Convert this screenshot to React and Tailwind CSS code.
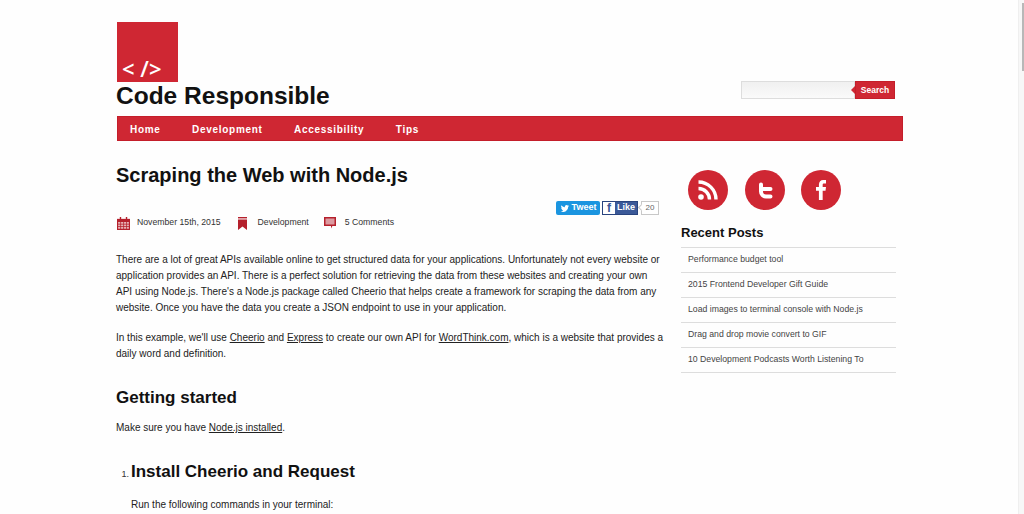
import React from 'react';

const font = "font-['Liberation_Sans',Arial,sans-serif]";

function CalendarIcon() {
  return (
    <svg width="13" height="13" viewBox="0 0 14 14">
      <path d="M0 2h14v12H0z" fill="#b5202c" />
      <path d="M3 0h1.500v3H3zM9.500 0H11v3H9.500z" fill="#b5202c" />
      <path d="M1.200 5.500h2.400v1.800H1.200zM4.400 5.500h2.400v1.800H4.400zM7.600 5.500H10v1.800H7.600zM10.800 5.500h2v1.800h-2zM1.200 8.200h2.400V10H1.200zM4.400 8.200h2.400V10H4.400zM7.600 8.200H10V10H7.600zM10.800 8.200h2V10h-2zM1.200 10.900h2.400v1.800H1.200zM4.400 10.900h2.400v1.800H4.400zM7.600 10.900H10v1.800H7.600zM10.800 10.900h2v1.800h-2z" fill="#e7b4b8" />
    </svg>
  );
}

function BookmarkIcon() {
  return (
    <svg width="9" height="13" viewBox="0 0 9 13">
      <path d="M0 0h9v1.400H0z" fill="#b5202c" />
      <path d="M0 2.400h9V13L4.500 9.600 0 13z" fill="#b5202c" />
    </svg>
  );
}

function CommentIcon() {
  return (
    <svg width="12" height="12" viewBox="0 0 12 12">
      <path d="M0 0h12v9H8.400L7 11.500V9H0z" fill="#b5202c" />
      <path d="M1.500 1.500h9v6h-9z" fill="#dc9aa0" />
    </svg>
  );
}

function SocialCircle({ children }) {
  return (
    <a className="w-10 h-10 rounded-full bg-[#cf2733] flex items-center justify-center">
      {children}
    </a>
  );
}

function Prose({ children, className = '' }) {
  return <p className={`text-[10px] leading-[16px] text-[#222] ${className}`}>{children}</p>;
}

const recentPosts = [
  'Performance budget tool',
  '2015 Frontend Developer Gift Guide',
  'Load images to terminal console with Node.js',
  'Drag and drop movie convert to GIF',
  '10 Development Podcasts Worth Listening To',
];

export default function App() {
  return (
    <div className={`h-[514px] overflow-hidden bg-[#fefefe] relative ${font}`}>
      {/* overlay scrollbar */}
      <div className="absolute top-0 right-0 bottom-0 w-[6px] bg-[#f7f7f7] border-l border-[#efefef]">
        <div className="absolute top-[3px] right-0 w-[2px] h-[68px] bg-[#b8b8b8]" />
      </div>

      <div className="w-[786px] ml-[117px] pt-[22px]">
        {/* Header */}
        <header className="flex items-end justify-between h-[94px]">
          <div className="self-start">
            <div className="w-[61px] h-[60px] bg-[#cf2733] flex items-end pl-[5px]">
              <span className="text-white text-[22px] leading-[27px] font-semibold font-['Open_Sans',sans-serif]">&lt; /&gt;</span>
            </div>
            <h1 className="text-[24.5px] leading-[27px] font-bold text-[#111] -ml-px">Code Responsible</h1>
          </div>
          <div className="flex mr-2 mb-[17px] h-[18px]">
            <div className="w-[114px] border border-[#ddd] bg-linear-to-b from-[#f0f0f0] to-[#fafafa]" />
            <div className="w-[40px] bg-[#cf2733] border border-[#c41e2a] text-white text-[8.5px] font-bold flex items-center justify-center relative">
              <span className="absolute -left-[5px] top-[4px] w-0 h-0 border-y-[4px] border-y-transparent border-r-[4px] border-r-[#cf2733]" />
              Search
            </div>
          </div>
        </header>

        {/* Nav */}
        <nav className="h-[25px] bg-[#cf2733] border border-[#c41e2a] flex items-center pl-3 pt-px gap-[31.5px] text-white text-[10px] font-bold tracking-[0.7px]">
          <a>Home</a>
          <a>Development</a>
          <a>Accessibility</a>
          <a>Tips</a>
        </nav>

        <div className="flex">
          {/* Article */}
          <main className="w-[548px]">
            <h1 className="mt-[22px] -ml-px text-[20px] leading-[25px] font-bold text-[#111]">Scraping the Web with Node.js</h1>
            <div className="flex justify-end gap-[2px] items-center h-4 mt-[12px] pr-[6px]">
              <span className="w-[44px] h-[14px] rounded-[2px] bg-[#1b95e0] text-white text-[9px] font-bold flex items-center justify-center">
                <svg width="10" height="9" viewBox="0 0 24 24" className="mr-[2px]" fill="white"><path d="M23 4.900c-.8.4-1.700.6-2.600.7.900-.6 1.700-1.400 2-2.500-.9.5-1.900.9-2.900 1.100a4.600 4.600 0 0 0-7.900 4.200C7.800 8.200 4.400 6.300 2.200 3.600a4.600 4.600 0 0 0 1.400 6.200c-.7 0-1.400-.2-2.100-.6 0 2.300 1.600 4.300 3.700 4.700-.7.2-1.400.2-2.100.1.600 1.900 2.300 3.200 4.300 3.200A9.300 9.300 0 0 1 .6 19.100a13 13 0 0 0 20-11.600c.9-.7 1.700-1.500 2.400-2.600z" /></svg>
                Tweet
              </span>
              <span className="w-[36px] h-[14px] -mt-px bg-[#3b5998] border border-[#29447e] text-white text-[9px] font-bold flex items-center">
                <span className="w-[12px] h-full bg-white text-[#3b5998] text-[12px] leading-[13px] text-center">f</span>
                <span className="pl-[2px]">Like</span>
              </span>
              <span className="w-[18px] h-[14px] -mt-px ml-px border border-[#c8c8c8] bg-white text-[#666] text-[8px] flex items-center justify-center relative">
                <span className="absolute -left-[3px] top-[3px] w-[5px] h-[5px] rotate-45 bg-white border-l border-b border-[#c8c8c8]" />
                20
              </span>
            </div>
            <div className="flex items-center text-[8.7px] text-[#333] h-[14px]">
              <CalendarIcon />
              <span className="ml-[7px]">November 15th, 2015</span>
              <span className="ml-[17px]"><BookmarkIcon /></span>
              <span className="ml-[11px]">Development</span>
              <span className="ml-[15px]"><CommentIcon /></span>
              <span className="ml-[9px]">5 Comments</span>
            </div>
            <Prose className="mt-[22px] -ml-px">
              There are a lot of great APIs available online to get structured data for your applications. Unfortunately not every website or application provides an API. There is a perfect solution for retrieving the data from these websites and creating your own API using Node.js. There's a Node.js package called Cheerio that helps create a framework for scraping the data from any website. Once you have the data you create a JSON endpoint to use in your application.
            </Prose>
            <Prose className="mt-[14px] -ml-px">
              In this example, we'll use <u>Cheerio</u> and <u>Express</u> to create our own API for <u>WordThink.com</u>, which is a website that provides a daily word and definition.
            </Prose>
            <h2 className="mt-[25px] -ml-px text-[17px] leading-[22px] font-bold text-[#111]">Getting started</h2>
            <Prose className="mt-[11px] -ml-px">Make sure you have <u>Node.js installed</u>.</Prose>
            <div className="flex items-baseline mt-[25px]">
              <span className="w-[14px] text-[9px] text-[#333] text-right pr-[2px]">1.</span>
              <h2 className="text-[17px] leading-[22px] font-bold text-[#111]">Install Cheerio and Request</h2>
            </div>
            <Prose className="mt-[14px] ml-[14px]">Run the following commands in your terminal:</Prose>
          </main>

          {/* Sidebar */}
          <aside className="w-[215px] ml-[16px]">
            <div className="flex mt-[29px] pl-[7px] gap-x-[16.5px]">
              <SocialCircle>
                <svg width="20" height="20" viewBox="0 0 20 20" fill="none" stroke="white" strokeWidth="3.400">
                  <circle cx="3" cy="17" r="2.800" fill="white" stroke="none" />
                  <path d="M0.500 8.500a11 11 0 0 1 11 11M0.500 2a17.500 17.500 0 0 1 17.500 17.500" />
                </svg>
              </SocialCircle>
              <SocialCircle>
                <svg width="16" height="17" viewBox="0 0 16 17" fill="none" stroke="white" strokeWidth="4" strokeLinecap="round">
                  <path d="M4 2.500v7a5 5 0 0 0 5 5h4.500M4 7h9.500" />
                </svg>
              </SocialCircle>
              <SocialCircle>
                <svg width="10" height="20" viewBox="0 0 12 24" fill="white">
                  <path d="M3.500 24V13H0V8.500h3.500V5.500C3.500 2 5.600 0 8.600 0H12v4.200H9.800c-1.300 0-1.800.6-1.800 1.700v2.600h4L11.400 13H8v11z" />
                </svg>
              </SocialCircle>
            </div>
            <h3 className="mt-[14px] text-[13px] leading-[18px] font-bold text-[#111]">Recent Posts</h3>
            <ul className="mt-[5px] border-t border-[#ddd]">
              {recentPosts.map((post) => (
                <li key={post} className="h-[25px] border-b border-[#ddd] pl-[7px] flex items-center text-[8.7px] text-[#444]">
                  {post}
                </li>
              ))}
            </ul>
          </aside>
        </div>
      </div>
    </div>
  );
}
